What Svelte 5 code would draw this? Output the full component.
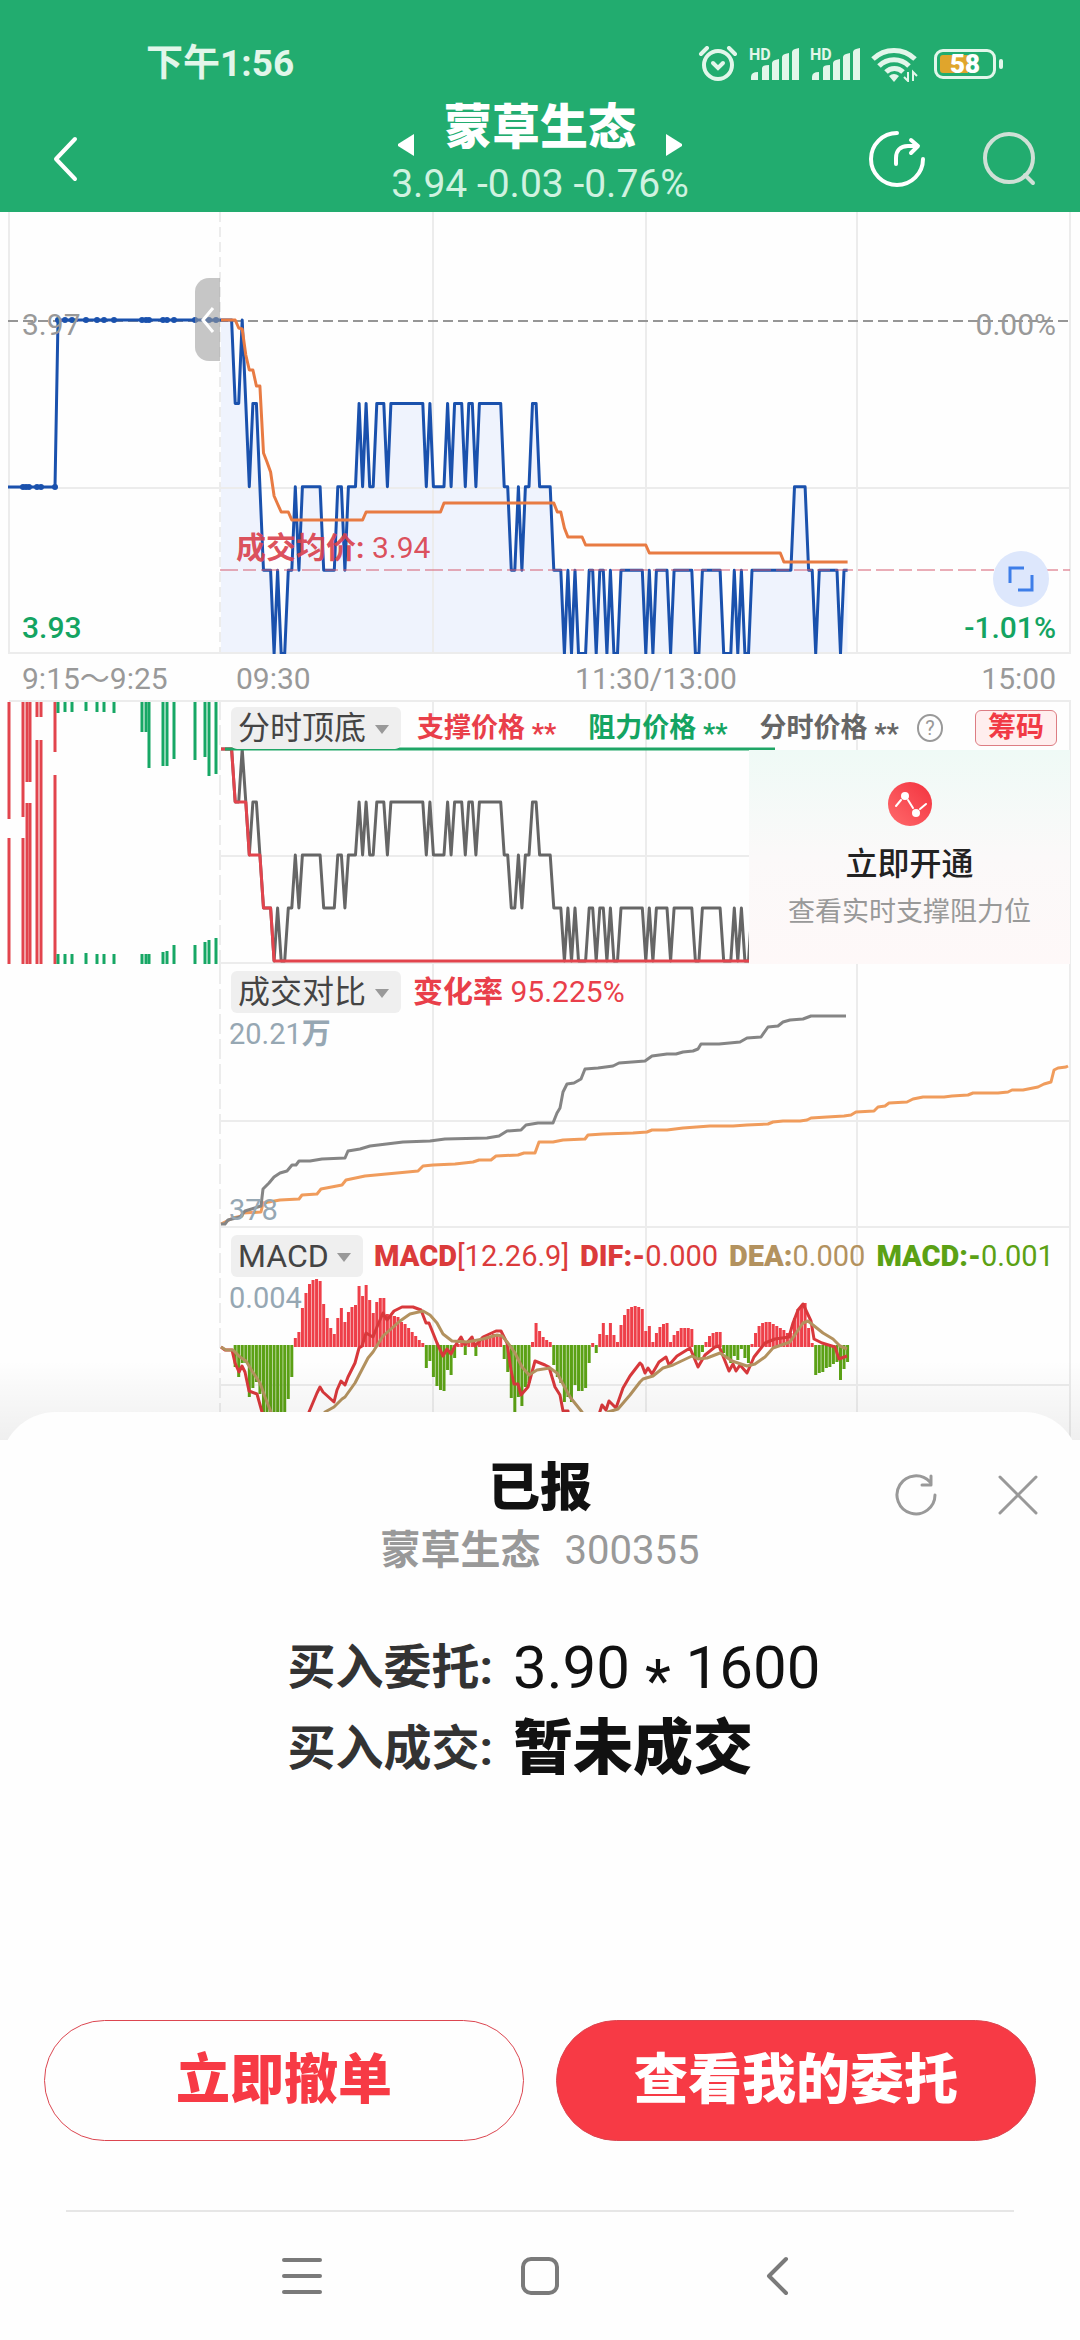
<script lang="ts">
  const LEFT = 221;
  const STEP = 3.54;
  const xAt = (minute: number) => LEFT + minute * STEP;

  // price ticks per minute as [level, minutes]; level 0 is 3.97, level 4 is 3.93
  const runs = [
    [0, 4], [1, 2], [0, 1], [1, 1], [2, 1], [1, 2], [2, 1], [3, 3], [4, 1], [3, 1], [4, 2], [3, 2],
    [2, 1], [3, 1], [2, 6], [3, 4], [2, 2], [3, 1], [2, 3], [1, 1], [2, 1], [1, 1], [2, 2], [1, 3],
    [2, 1], [1, 10], [2, 1], [1, 1], [2, 4], [1, 1], [2, 1], [1, 3], [2, 1], [1, 2], [2, 1], [1, 7],
    [2, 2], [3, 2], [2, 1], [3, 1], [2, 2], [1, 2], [2, 4], [3, 3], [4, 1], [3, 1], [4, 1], [3, 1],
    [4, 3], [3, 2], [4, 1], [3, 2], [4, 1], [3, 1], [4, 2], [3, 7], [4, 1], [3, 1], [4, 1], [3, 4],
    [4, 1], [3, 6], [4, 2], [3, 6], [4, 3], [3, 1], [4, 1], [3, 1], [4, 2], [3, 12], [2, 4], [3, 2],
    [4, 1], [3, 6], [4, 1], [3, 2],
  ];
  const levels = runs.flatMap(([level, count]) => Array(count).fill(level) as number[]);

  let low = 0;
  const support = levels.map((level) => (low = Math.max(low, level)));

  function toLine(list: number[], top: number, gap: number) {
    return list.map((level, i) => `${xAt(i).toFixed(1)},${top + level * gap}`).join(" ");
  }

  const priceLine = toLine(levels, 108, 83.4);
  const priceArea = `${LEFT},441 ${priceLine} ${xAt(levels.length - 1)},441`;
  const timeLine = toLine(levels, 49, 53);
  const supportLine = toLine(support, 49, 53);

  const average = [
    [0, 108], [4, 108], [5, 116], [6, 117], [7, 143], [8, 158], [9, 158], [10, 174], [11, 174],
    [12, 241], [13, 250], [14, 260], [15, 284], [16, 292], [17, 300], [19, 300], [20, 308], [40, 308],
    [41, 300], [62, 300], [63, 291], [94, 291], [95, 300], [96, 300], [97, 316], [98, 325], [102, 325],
    [103, 333], [120, 333], [121, 341], [158, 341], [159, 350], [177, 350],
  ];
  const averageLine = average.map(([m, y]) => `${xAt(m).toFixed(1)},${y}`).join(" ");

  const auctionLow = [23, 26, 29, 37, 41, 55];
  const auctionHigh = [58, 65, 72, 86, 97, 104, 114, 142, 146, 149, 163, 167, 174, 195, 209, 216];

  // [x, end of upper bar, start of lower bar]
  const buyBars = [
    [9, 119, 138], [23, 117, 138], [27, 82, 103], [30, 82, 103], [37, 17, 40], [41, 17, 40], [55, 52, 75],
  ];
  const sellBars = [
    [58, 13, 254], [65, 12, 254], [72, 12, 254], [86, 11, 253], [97, 12, 254], [104, 12, 254],
    [114, 13, 254], [142, 32, 254], [146, 32, 254], [149, 68, 254], [163, 66, 252], [167, 66, 251],
    [174, 59, 245], [195, 60, 245], [205, 57, 242], [209, 76, 240], [216, 74, 238],
  ];

  const todayVolume =
    "221,260 225,260 228,256 240,253 245,247 261,242 263,225 269,219 274,213 280,209 287,207 292,201 296,201 299,197 310,197 322,195 345,194 348,187 360,185 370,182 403,178 430,177 445,175 487,174 499,172 507,167 521,166 526,161 538,159 553,159 557,149 560,144 563,128 567,120 574,119 581,115 585,105 598,104 613,102 619,99 645,97 652,92 667,90 676,90 683,88 693,87 698,85 701,80 719,80 740,78 747,74 761,73 768,63 778,62 783,58 790,56 803,55 811,52 846,52";
  const lastVolume =
    "221,260 227,257 233,254 242,252 243,249 261,248 263,239 280,236 299,235 302,231 317,230 321,225 342,221 346,216 365,212 397,209 418,207 423,202 433,201 455,200 473,198 479,196 491,196 496,192 518,191 524,189 535,189 539,178 553,178 563,176 585,175 588,171 603,170 633,169 647,168 652,166 667,166 683,164 710,162 733,162 747,161 768,160 773,158 783,157 800,157 807,156 811,154 827,153 844,152 851,151 856,148 874,147 878,143 885,142 889,139 907,138 913,135 923,133 944,133 952,132 968,131 973,129 998,129 1008,128 1012,126 1023,126 1038,123 1044,120 1051,118 1054,106 1058,104 1066,103 1068,102";

  const macd = [
    0, 0, 0, 0, -21, -31, -17, -17, -51, -42, -36, -48, -74, -74, -74, -74, -74, -74, -74, -53, -31,
    8, 14, 38, 53, 62, 66, 67, 65, 42, 28, 18, 12, 28, 38, 24, 34, 39, 41, 60, 50, 61, 46, 33, 44, 48,
    48, 32, 30, 30, 29, 24, 22, 18, 14, 10, 6, 3, -22, -15, -31, -40, -44, -45, -24, -29, -12, 2, 4,
    -9, 3, 4, -10, 5, 7, 9, 10, 12, 12, 9, -13, -26, -52, -70, -51, -60, -41, -37, 4, 23, 15, 9, 6, 4,
    -19, -31, -37, -56, -51, -56, -39, -45, -45, -42, -17, 3, -7, 12, 23, 11, 23, 11, 4, 21, 31, 37,
    39, 40, 39, 37, 15, 20, 4, 13, 19, 22, 23, 4, 11, 15, 18, 18, 18, 17, -12, -13, -6, 4, 10, 13, 14,
    14, -7, -12, -17, -10, -14, -3, -12, -17, 2, 13, 20, 23, 24, 24, 22, 20, 18, 16, 13, 13, 28, 37,
    41, 43, 18, 3, -29, -27, -26, -22, -21, -18, -16, -34, -23, -16,
  ];
  const dif =
    "221,124 225,127 232,127 235,140 239,149 242,143 245,149 249,168 257,171 262,189 265,220 305,220 309,189 317,170 320,164 323,169 334,179 337,167 341,158 345,162 348,154 355,140 359,125 362,123 366,110 373,114 377,104 383,90 387,97 394,88 402,84 413,84 421,87 426,100 429,100 437,120 443,133 447,126 451,131 455,123 461,114 465,122 472,114 475,123 483,114 496,108 501,108 504,114 507,120 511,147 514,161 518,161 521,172 528,164 535,138 545,142 549,144 555,164 560,172 563,188 568,188 571,220 590,220 602,182 606,187 609,178 616,185 623,165 630,153 640,140 642,142 645,150 648,145 652,151 659,139 666,134 669,142 677,133 690,125 698,144 705,132 715,124 719,123 729,148 733,141 736,148 740,142 747,150 754,134 765,120 775,116 789,114 793,100 798,87 803,81 811,98 814,116 822,120 835,124 839,136 847,133";
  const dea =
    "221,124 226,127 233,127 240,134 246,138 252,148 260,160 265,174 271,189 280,220 310,220 325,189 334,184 342,176 345,174 355,160 368,135 373,129 383,113 400,98 410,91 423,88 430,92 437,100 443,111 452,118 467,119 483,116 497,112 502,113 508,120 515,130 522,144 529,152 537,147 550,145 557,150 570,174 582,189 590,215 598,215 608,189 618,186 630,172 640,159 643,156 653,153 663,145 673,142 692,133 698,136 707,135 720,130 732,138 747,143 755,141 765,134 773,125 790,119 803,100 808,98 823,110 833,116 840,123 847,126";

  const columns = [433, 646, 857, 1070];
</script>

{#snippet signal()}
  <svg class="signal" viewBox="0 -6 50 48" aria-hidden="true">
    <text x="0" y="14">HD</text>
    <path d="M2 34v-3q0-5 7-5v8zM13 34V22q0-3 7-3v15zM23 34V17q0-3 7-4v21zM33 34V11q0-3 7-4v27zM43 34V6q0-3 7-4v32z" />
  </svg>
{/snippet}

{#snippet picker(name, label)}
  <label class="picker">
    <select aria-label={label}>
      <option>{name}</option>
    </select>
  </label>
{/snippet}

<div class="page">
  <header>
    <div class="status">
      <span>下午1:56</span>
      <div class="status-icons">
        <svg width="40" height="36" viewBox="0 0 40 36" aria-hidden="true">
          <g fill="none" stroke="#e2f6ea" stroke-width="4" stroke-linecap="round">
            <circle cx="20" cy="19" r="14" />
            <path d="M3 8l6-6M37 8l-6-6" />
            <path d="M15 17l5 5 5-5" />
          </g>
        </svg>
        {@render signal()}
        {@render signal()}
        <svg width="48" height="36" viewBox="0 0 48 36" aria-hidden="true">
          <g fill="none" stroke="#e2f6ea" stroke-width="5">
            <path d="M2 13a30 30 0 0 1 42 0" />
            <path d="M8 20a21 21 0 0 1 30 0" />
            <path d="M15 26a12 12 0 0 1 17 0" />
          </g>
          <path d="M23 36l-5-6a8 8 0 0 1 10 0z" fill="#e2f6ea" />
          <path d="M37 26v9l-4-4M42 35v-9l4 4" fill="none" stroke="#e2f6ea" stroke-width="2" />
        </svg>
        <div class="battery"><i></i><b>58</b></div>
      </div>
    </div>
    <nav class="top">
      <button class="icon back" aria-label="返回">
        <svg width="26" height="46" viewBox="0 0 26 46"><path d="M23 3L4 23l19 20" /></svg>
      </button>
      <div class="stock">
        <div class="name">
          <button class="icon" aria-label="上一只">
            <svg width="16" height="22" viewBox="0 0 16 22"><path class="solid" d="M16 0v22L0 12v-2z" /></svg>
          </button>
          <h1>蒙草生态</h1>
          <button class="icon" aria-label="下一只">
            <svg width="16" height="22" viewBox="0 0 16 22"><path class="solid" d="M0 0v22l16-10v-2z" /></svg>
          </button>
        </div>
        <p>3.94 -0.03 -0.76%</p>
      </div>
      <div class="tools">
        <button class="icon" aria-label="分享">
          <svg width="56" height="56" viewBox="0 0 56 56">
            <path d="M28 2a26 26 0 1 0 26 26" />
            <path d="M27 33v-6c0-7 4-12 12-12h9M42 9l7 6-7 7" />
          </svg>
        </button>
        <button class="icon" aria-label="搜索">
          <svg width="56" height="56" viewBox="0 0 56 56" class="search">
            <circle cx="28" cy="27" r="24" /><path d="M44 44l8 8" />
          </svg>
        </button>
      </div>
    </nav>
  </header>

  <main>
    <section class="panel price">
      <svg class="chart" viewBox="0 0 1080 442" preserveAspectRatio="none" aria-hidden="true">
        <polygon points={priceArea} fill="#eff3fd" />
        <g class="grid">
          {#each [9, ...columns] as x}<path d="M{x} 0V442" />{/each}
          <path d="M9 276H1070M9 441H1070" />
          <path d="M220 0V442" stroke-dasharray="10 5" />
        </g>
        <path d="M8 109H1070" stroke="#969696" stroke-width="2" stroke-dasharray="10 5" />
        <g class="line" stroke="#1a51ad">
          <path d="M8 275H55L58 108H{LEFT}" />
          <polyline points={priceLine} />
        </g>
        {#each auctionLow as x}<circle cx={x} cy="275" r="3" fill="#1a51ad" />{/each}
        {#each auctionHigh as x}<circle cx={x} cy="108" r="3" fill="#1a51ad" />{/each}
        <path d="M220 358H1070" stroke="#d55b70" stroke-opacity="0.5" stroke-width="2" stroke-dasharray="18 5 13 5" />
        <polyline class="line" points={averageLine} stroke="#e87b43" />
      </svg>
      <div class="scale">
        <span>3.97</span>
        <span class="down">3.93</span>
      </div>
      <div class="scale end">
        <span>0.00%</span>
        <span class="down">-1.01%</span>
      </div>
      <button class="fold" aria-label="收起竞价">
        <svg width="14" height="28" viewBox="0 0 14 28"><path d="M12 2L2 14l10 12" /></svg>
      </button>
      <p class="deal"><b>成交均价:</b> 3.94</p>
      <button class="expand" aria-label="全屏">
        <svg width="26" height="26" viewBox="0 0 26 26"><path d="M16 2H2v15M10 24h14V9" /></svg>
      </button>
    </section>

    <div class="axis">
      <span>9:15～9:25</span>
      <div class="hours"><span>09:30</span><span>11:30/13:00</span><span>15:00</span></div>
    </div>

    <section class="panel timing">
      <svg class="chart" viewBox="0 0 1080 264" preserveAspectRatio="none" aria-hidden="true">
        <g class="grid">
          {#each columns as x}<path d="M{x} 0V264" />{/each}
          <path d="M9 1H1070M220 156H1070M220 263H1070" />
          <path d="M220 0V264" stroke-dasharray="20 5" />
        </g>
        <g stroke="#e2444d" stroke-width="3">
          {#each buyBars as [x, top, bottom]}<path d="M{x} 2V{top}M{x} {bottom}V264" />{/each}
        </g>
        <g stroke="#17a765" stroke-width="3">
          {#each sellBars as [x, top, bottom]}<path d="M{x} 2V{top}M{x} {bottom}V264" />{/each}
        </g>
        <polyline class="line" points={timeLine} stroke="#666" />
        <polyline class="line" points={supportLine} stroke="#e2444d" />
        <path class="line" d="M225 49H775" stroke="#1fa566" />
      </svg>
      <div class="content">
        <div class="head small">
          {@render picker("分时顶底", "指标一")}
          <span class="up">支撑价格 <i>**</i></span>
          <span class="down">阻力价格 <i>**</i></span>
          <span class="plain">分时价格 <i>**</i></span>
          <button class="help" aria-label="说明">?</button>
          <button class="chips">筹码</button>
        </div>
        <a class="promo" href="#open">
          <svg width="44" height="44" viewBox="0 0 44 44" aria-hidden="true">
            <defs>
              <linearGradient id="badge" x1="0" y1="1" x2="1" y2="0">
                <stop offset="0" stop-color="#ff6a6c" />
                <stop offset="1" stop-color="#f3323e" />
              </linearGradient>
            </defs>
            <circle cx="22" cy="22" r="22" fill="url(#badge)" />
            <path d="M8 24l5-6M20 18l5 8M32 27l6-5" stroke="#fff" stroke-width="2" stroke-linecap="round" />
            <circle cx="17" cy="14" r="4" fill="#fff" />
            <circle cx="28" cy="31" r="4" fill="#fff" />
          </svg>
          <strong>立即开通</strong>
          <span>查看实时支撑阻力位</span>
        </a>
      </div>
    </section>

    <section class="panel volume">
      <svg class="chart" viewBox="0 0 1080 264" preserveAspectRatio="none" aria-hidden="true">
        <g class="grid">
          {#each columns as x}<path d="M{x} 0V264" />{/each}
          <path d="M220 157H1070M220 263H1070" />
          <path d="M220 0V264" stroke-dasharray="20 5" />
        </g>
        <polyline class="line" points={lastVolume} stroke="#f09c5c" />
        <polyline class="line" points={todayVolume} stroke="#858585" />
      </svg>
      <div class="content">
        <div class="head">
          {@render picker("成交对比", "指标二")}
          <span class="up"><b>变化率</b> 95.225%</span>
        </div>
        <span class="mark">20.21<b>万</b></span>
        <span class="mark last">378</span>
      </div>
    </section>

    <section class="panel macd">
      <svg class="chart" viewBox="0 0 1080 212" preserveAspectRatio="none" aria-hidden="true">
        <g class="grid">
          {#each columns as x}<path d="M{x} 0V212" />{/each}
          <path d="M220 157H1070" />
          <path d="M220 0V212" stroke-dasharray="20 5" />
        </g>
        <g transform="translate(0 -5)">
          {#each macd as value, i}
            {#if value > 0}
              <rect x={xAt(i) - 1.5} y={123 - value} width="3" height={value + 1} fill="#ee3f49" />
            {:else if value < 0}
              <rect x={xAt(i) - 1.5} y="122" width="3" height={1 - value} fill="#5ba115" />
            {/if}
          {/each}
          <polyline class="line" points={dif} stroke="#d8383b" />
          <polyline class="line" points={dea} stroke="#b3925f" />
        </g>
      </svg>
      <div class="content">
        <div class="head values">
          {@render picker("MACD", "指标三")}
          <span class="red"><b>MACD</b>[12.26.9]</span>
          <span class="red"><b>DIF:-</b>0.000</span>
          <span class="tan"><b>DEA:</b>0.000</span>
          <span class="olive"><b>MACD:-</b>0.001</span>
        </div>
        <span class="mark">0.004</span>
      </div>
    </section>
  </main>

  <section class="sheet">
    <div class="title">
      <h2>已报</h2>
      <p><b>蒙草生态</b><span>300355</span></p>
      <div class="actions">
        <button class="icon" aria-label="刷新">
          <svg width="44" height="44" viewBox="0 0 44 44"><path d="M41 22a19 19 0 1 1-5-13M37 3v9h-9" /></svg>
        </button>
        <button class="icon" aria-label="关闭">
          <svg width="44" height="44" viewBox="0 0 44 44"><path d="M4 4l36 36M40 4L4 40" /></svg>
        </button>
      </div>
    </div>
    <dl>
      <dt>买入委托:</dt>
      <dd>3.90 <i>*</i> 1600</dd>
      <dt>买入成交:</dt>
      <dd><b>暂未成交</b></dd>
    </dl>
    <div class="buttons">
      <button class="cancel">立即撤单</button>
      <button class="view">查看我的委托</button>
    </div>
  </section>

  <nav class="system">
    <button class="icon" aria-label="最近任务">
      <svg width="40" height="40" viewBox="0 0 40 40"><path d="M2 4h36M2 20h36M2 36h36" /></svg>
    </button>
    <button class="icon" aria-label="主页">
      <svg width="40" height="40" viewBox="0 0 40 40"><rect x="3" y="3" width="34" height="34" rx="8" /></svg>
    </button>
    <button class="icon" aria-label="返回上级">
      <svg width="40" height="40" viewBox="0 0 40 40"><path d="M28 3L11 20l17 17" /></svg>
    </button>
  </nav>
</div>

<style>
  :global(body) {
    background: #fefefe;
  }

  .page {
    display: flex;
    flex-direction: column;
    min-height: 100vh;
    font-family: Roboto, "Noto Sans CJK SC", sans-serif;
    font-size: 30px;
    line-height: 36px;
    color: #999;
  }

  h1,
  h2,
  p,
  dl,
  dd {
    margin: 0;
  }

  button,
  select {
    font: inherit;
    color: inherit;
    border: 0;
    padding: 0;
    background: none;
  }

  i {
    font-style: normal;
    line-height: 0;
    vertical-align: sub;
  }

  .icon {
    display: flex;
  }

  .icon svg {
    fill: none;
    stroke: currentColor;
    stroke-width: 4;
    stroke-linecap: round;
    stroke-linejoin: round;
  }

  .icon .solid {
    fill: currentColor;
    stroke: none;
  }

  header {
    background: #22ac6f;
    color: #fff;
  }

  .status {
    display: flex;
    justify-content: space-between;
    align-items: center;
    padding: 40px 76px 0 146px;
    font-size: 37px;
    font-weight: 700;
    color: #e2f6ea;
  }

  .status-icons {
    display: flex;
    align-items: center;
    gap: 11px;
  }

  .signal {
    width: 50px;
    height: 48px;
    fill: #e2f6ea;
  }

  .signal text {
    font-size: 16px;
    font-weight: 700;
  }

  .battery {
    position: relative;
    width: 62px;
    height: 30px;
    box-sizing: border-box;
    margin: 0 8px 0 4px;
    border: 3px solid #e2f6ea;
    border-radius: 9px;
    text-align: center;
  }

  .battery i {
    position: absolute;
    left: 3px;
    top: 3px;
    bottom: 3px;
    width: 50%;
    border-radius: 3px 0 0 3px;
    background: #e0a52c;
  }

  .battery b {
    position: relative;
    display: block;
    font-size: 26px;
    line-height: 24px;
    color: #fff;
  }

  .battery::after {
    content: "";
    position: absolute;
    right: -10px;
    top: 7px;
    width: 4px;
    height: 10px;
    border-radius: 2px;
    background: #e2f6ea;
  }

  .top {
    display: grid;
    grid-template-columns: 1fr auto 1fr;
    align-items: center;
    padding: 12px 43px 0;
  }

  .back {
    padding: 6px 0 0 9px;
  }

  .name {
    display: flex;
    align-items: flex-end;
    justify-content: center;
    gap: 30px;
  }

  h1 {
    font-size: 48px;
    line-height: 56px;
    font-weight: 900;
  }

  .stock p {
    font-size: 39px;
    line-height: 56px;
    text-align: center;
    color: #d0f2e0;
  }

  .tools {
    display: flex;
    justify-content: flex-end;
    gap: 56px;
    padding-top: 6px;
  }

  .search {
    color: #cfe0d6;
  }

  .panel {
    position: relative;
    display: grid;
    grid-template-columns: 22fr 86fr;
  }

  .chart {
    position: absolute;
    inset: 0;
    width: 100%;
    height: 100%;
  }

  .grid {
    fill: none;
    stroke: #ececec;
    stroke-width: 2;
  }

  .line {
    fill: none;
    stroke-width: 3;
    stroke-linejoin: round;
  }

  .price {
    height: 442px;
  }

  .timing,
  .volume {
    height: 264px;
  }

  .macd {
    height: 212px;
    overflow: hidden;
  }

  .macd::after {
    content: "";
    position: absolute;
    inset: auto 0 0;
    height: 80px;
    background: linear-gradient(transparent, #0000000f);
  }

  .scale {
    position: relative;
    display: flex;
    flex-direction: column;
    justify-content: space-between;
    padding: 95px 24px 8px 22px;
  }

  .end {
    align-items: flex-end;
  }

  .down {
    color: #14a462;
    font-weight: 500;
  }

  .up {
    color: #e93f4a;
  }

  .plain {
    color: #666;
  }

  .fold {
    position: absolute;
    right: 79.6%;
    top: 66px;
    width: 25px;
    height: 83px;
    display: grid;
    place-items: center;
    border-radius: 14px 0 0 14px;
    background: #9a9a9a90;
  }

  .fold svg {
    fill: none;
    stroke: #fff;
    stroke-width: 3;
  }

  .deal {
    position: absolute;
    left: 236px;
    top: 318px;
    color: #d9414dea;
  }

  .expand {
    position: absolute;
    right: 31px;
    top: 339px;
    width: 56px;
    height: 56px;
    display: grid;
    place-items: center;
    border-radius: 50%;
    background: #dde7fc;
  }

  .expand svg {
    fill: none;
    stroke: #3e7ee8;
    stroke-width: 3;
  }

  .axis {
    display: grid;
    grid-template-columns: 22fr 86fr;
    height: 46px;
    line-height: 50px;
  }

  .axis > span {
    padding-left: 22px;
  }

  .hours {
    display: grid;
    grid-template-columns: 1fr auto 1fr;
    padding: 0 24px 0 16px;
  }

  .hours span:nth-child(2) {
    margin-left: 20px;
  }

  .hours span:last-child {
    text-align: right;
  }

  .content {
    grid-column: 2;
    position: relative;
    display: flex;
    flex-direction: column;
    min-width: 0;
    padding-right: 10px;
  }

  .head {
    display: flex;
    align-items: center;
    height: 44px;
    padding: 6px 0 0 11px;
    gap: 12px;
    white-space: nowrap;
  }

  .small {
    gap: 32px;
    font-size: 27px;
    font-weight: 700;
  }

  .small .down {
    font-weight: 700;
  }

  .small .picker {
    margin-right: -16px;
  }

  .values {
    gap: 11px;
    font-size: 29px;
  }

  .values b {
    font-weight: 900;
  }

  .picker {
    position: relative;
    display: flex;
  }

  .picker select {
    appearance: none;
    height: 42px;
    padding: 0 34px 0 7px;
    border-radius: 6px;
    background: #efefef;
    color: #444;
    font-size: 32px;
    font-weight: 400;
  }

  .picker::after {
    content: "";
    position: absolute;
    right: 12px;
    top: 18px;
    border: 7px solid transparent;
    border-top: 9px solid #999;
    border-bottom: 0;
    pointer-events: none;
  }

  .help {
    width: 28px;
    height: 28px;
    margin-left: -14px;
    border: 2px solid #999;
    border-radius: 50%;
    font-size: 20px;
    line-height: 24px;
    font-weight: 400;
  }

  .chips {
    margin: 0 13px 0 auto;
    padding: 0 12px;
    border: 1px solid #dd7d83;
    border-radius: 6px;
    background: #ffeeee;
    color: #f13a45;
    font-size: 28px;
    line-height: 34px;
  }

  .promo {
    flex: 1;
    align-self: flex-end;
    display: flex;
    flex-direction: column;
    align-items: center;
    box-sizing: border-box;
    width: 321px;
    padding-top: 32px;
    background: linear-gradient(#effaf6, #fbf9f9 50%, #fef8f8);
    color: #999;
    font-size: 27px;
    text-decoration: none;
  }

  .promo strong {
    margin: 18px 0 10px;
    font-size: 32px;
    line-height: 40px;
    font-weight: 500;
    color: #222;
  }

  .mark {
    padding: 2px 0 0 9px;
    font-size: 29px;
    color: #96a7b3;
  }

  .last {
    margin-top: auto;
  }

  .red {
    color: #db3b3b;
  }

  .tan {
    color: #b3925f;
  }

  .olive {
    color: #5ba115;
  }

  .sheet {
    position: relative;
    flex: 1;
    display: flex;
    flex-direction: column;
    margin-top: -28px;
    padding: 45px 44px 69px;
    border-radius: 56px 56px 0 0;
    background: #fefefe;
  }

  .title {
    position: relative;
    text-align: center;
  }

  h2 {
    font-size: 52px;
    line-height: 64px;
    font-weight: 900;
    color: #111;
  }

  .title p {
    display: flex;
    justify-content: center;
    gap: 24px;
    font-size: 40px;
    line-height: 60px;
  }

  .actions {
    position: absolute;
    top: 16px;
    right: -4px;
    display: flex;
    gap: 58px;
  }

  .actions svg {
    stroke-width: 3;
  }

  dl {
    display: grid;
    grid-template-columns: auto auto;
    justify-content: center;
    column-gap: 20px;
    padding: 46px 0 0 28px;
    line-height: 81px;
  }

  dt {
    font-size: 48px;
    font-weight: 700;
    color: #333;
  }

  dd {
    font-size: 60px;
    color: #111;
  }

  dd b {
    font-weight: 900;
  }

  .buttons {
    display: grid;
    grid-template-columns: 1fr 1fr;
    gap: 32px;
    margin-top: auto;
  }

  .buttons button {
    height: 121px;
    border: 1px solid #dc4650;
    border-radius: 61px;
    font-size: 54px;
    font-weight: 900;
  }

  .cancel {
    color: #f73a45;
  }

  .buttons .view {
    background: #f73a45;
    color: #fff;
  }

  .system {
    display: flex;
    justify-content: center;
    gap: 198px;
    margin: 0 66px;
    padding: 44px 0;
    border-top: 2px solid #e6e6e6;
    color: #7a7a7a;
  }
</style>
